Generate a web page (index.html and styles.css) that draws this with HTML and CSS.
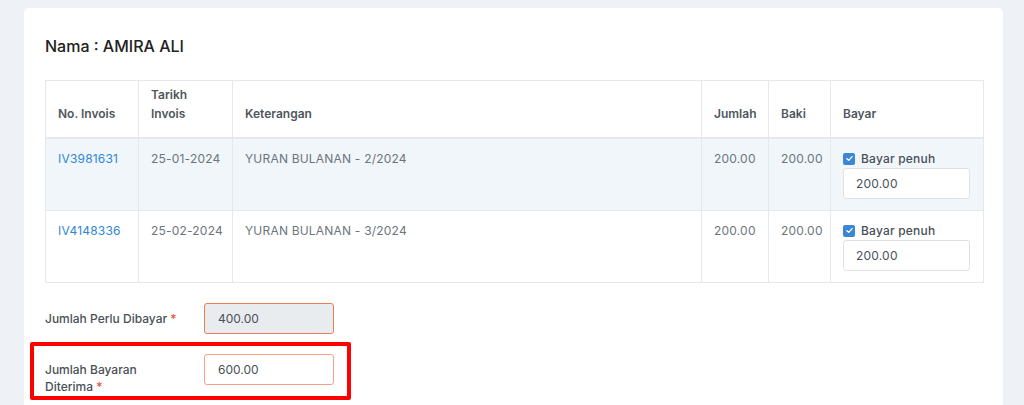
FILE: index.html
```html
<!DOCTYPE html>
<html>
<head>
<meta charset="utf-8">
<link rel="stylesheet" href="styles.css">
</head>
<body>
<div class="page">
  <div class="card">
    <h2 class="title">Nama : AMIRA ALI</h2>
    <table class="inv">
      <colgroup>
        <col class="c1"><col class="c2"><col class="c3"><col class="c4"><col class="c5"><col class="c6">
      </colgroup>
      <thead>
        <tr>
          <th>No. Invois</th>
          <th>Tarikh<br>Invois</th>
          <th>Keterangan</th>
          <th>Jumlah</th>
          <th>Baki</th>
          <th>Bayar</th>
        </tr>
      </thead>
      <tbody>
        <tr class="alt">
          <td><a class="link">IV3981631</a></td>
          <td>25-01-2024</td>
          <td>YURAN BULANAN - 2/2024</td>
          <td>200.00</td>
          <td>200.00</td>
          <td>
            <div class="chk"><span class="box"><svg viewBox="0 0 12 12" width="9" height="9"><path d="M2.5 6.2 L5 8.5 L9.5 3.5" fill="none" stroke="#fff" stroke-width="1.8" stroke-linecap="round" stroke-linejoin="round"/></svg></span><span>Bayar penuh</span></div>
            <div class="inp">200.00</div>
          </td>
        </tr>
        <tr>
          <td><a class="link">IV4148336</a></td>
          <td>25-02-2024</td>
          <td>YURAN BULANAN - 3/2024</td>
          <td>200.00</td>
          <td>200.00</td>
          <td>
            <div class="chk"><span class="box"><svg viewBox="0 0 12 12" width="9" height="9"><path d="M2.5 6.2 L5 8.5 L9.5 3.5" fill="none" stroke="#fff" stroke-width="1.8" stroke-linecap="round" stroke-linejoin="round"/></svg></span><span>Bayar penuh</span></div>
            <div class="inp">200.00</div>
          </td>
        </tr>
      </tbody>
    </table>

    <div class="form">
      <div class="frow">
        <label class="flabel">Jumlah Perlu Dibayar <span class="req">*</span></label>
        <div class="finput disabled">400.00</div>
      </div>
      <div class="frow hl">
        <label class="flabel">Jumlah Bayaran<br>Diterima <span class="req">*</span></label>
        <div class="finput light">600.00</div>
        <div class="mark"></div>
      </div>
    </div>
  </div>
</div>
</body>
</html>
```

FILE: styles.css
```css
* { box-sizing: border-box; }
html, body { margin: 0; padding: 0; }
body {
  background: #eef2f6;
  font-family: "Inter", "Noto Sans", sans-serif;
  color: #495057;
  height: 405px;
  overflow: hidden;
}
.page {
  padding: 8px 20px 0 24px;
}
.card {
  width: 979px;
  background: #fff;
  border-radius: 5px;
  padding: 26px 21px 40px 21px;
  min-height: 420px;
}
.title {
  margin: 0 0 22px 0;
  font-size: 16px;
  line-height: 24px;
  font-weight: 500;
  color: #222;
}
.inv {
  width: 938px;
  border-collapse: collapse;
  table-layout: fixed;
  font-size: 12px;
}
.c1 { width: 93px; }
.c2 { width: 94px; }
.c3 { width: 469px; }
.c4 { width: 67px; }
.c5 { width: 62px; }
.c6 { width: 153px; }
.inv th, .inv td {
  border: 1px solid #e5e8ec;
  text-align: left;
  white-space: nowrap;
}
.inv th {
  vertical-align: bottom;
  font-weight: 600;
  color: #4f565d;
  padding: 0 12px 14px 12px;
  line-height: 19px;
  height: 57px;
}
.inv thead tr { border-bottom: 2px solid #e5e8ec; }
.inv td {
  vertical-align: top;
  padding: 11px 12px 11px 12px;
  line-height: 18px;
  color: #6c757d;
  height: 71px;
  letter-spacing: 0.2px;
}
.inv tr.alt td { background: #f1f6fb; }
.link { color: #2f86d6; text-decoration: none; }
.chk {
  display: flex;
  align-items: center;
  gap: 6px;
  color: #495057;
  font-weight: 500;
  height: 18px;
}
.box {
  width: 12px;
  height: 12px;
  border-radius: 2px;
  background: #3b87d6;
  display: flex;
  align-items: center;
  justify-content: center;
}
.inp {
  width: 127px;
  height: 31px;
  border: 1px solid #dee2e6;
  border-radius: 3px;
  background: #fff;
  padding: 0 12px;
  line-height: 29px;
  color: #495057;
}
.form {
  margin-top: 20px;
  font-size: 12px;
}
.frow {
  display: flex;
  align-items: flex-start;
  gap: 23px;
  position: relative;
}
.frow + .frow { margin-top: 20px; }
.flabel {
  width: 136px;
  padding-top: 7px;
  line-height: 17px;
  font-weight: 500;
  color: #495057;
}
.req { color: #e8553a; }
.finput {
  width: 130px;
  height: 31px;
  border-radius: 3px;
  padding: 0 13px;
  line-height: 29px;
  color: #495057;
}
.finput.disabled {
  background: #e9ecef;
  border: 1px solid #ee7a58;
}
.finput.light {
  background: #fff;
  border: 1px solid #f5a185;
}
.mark {
  position: absolute;
  left: -15px;
  top: -12px;
  width: 321px;
  height: 58px;
  border: 4px solid #ff0000;
  border-radius: 2px;
  pointer-events: none;
}
```
